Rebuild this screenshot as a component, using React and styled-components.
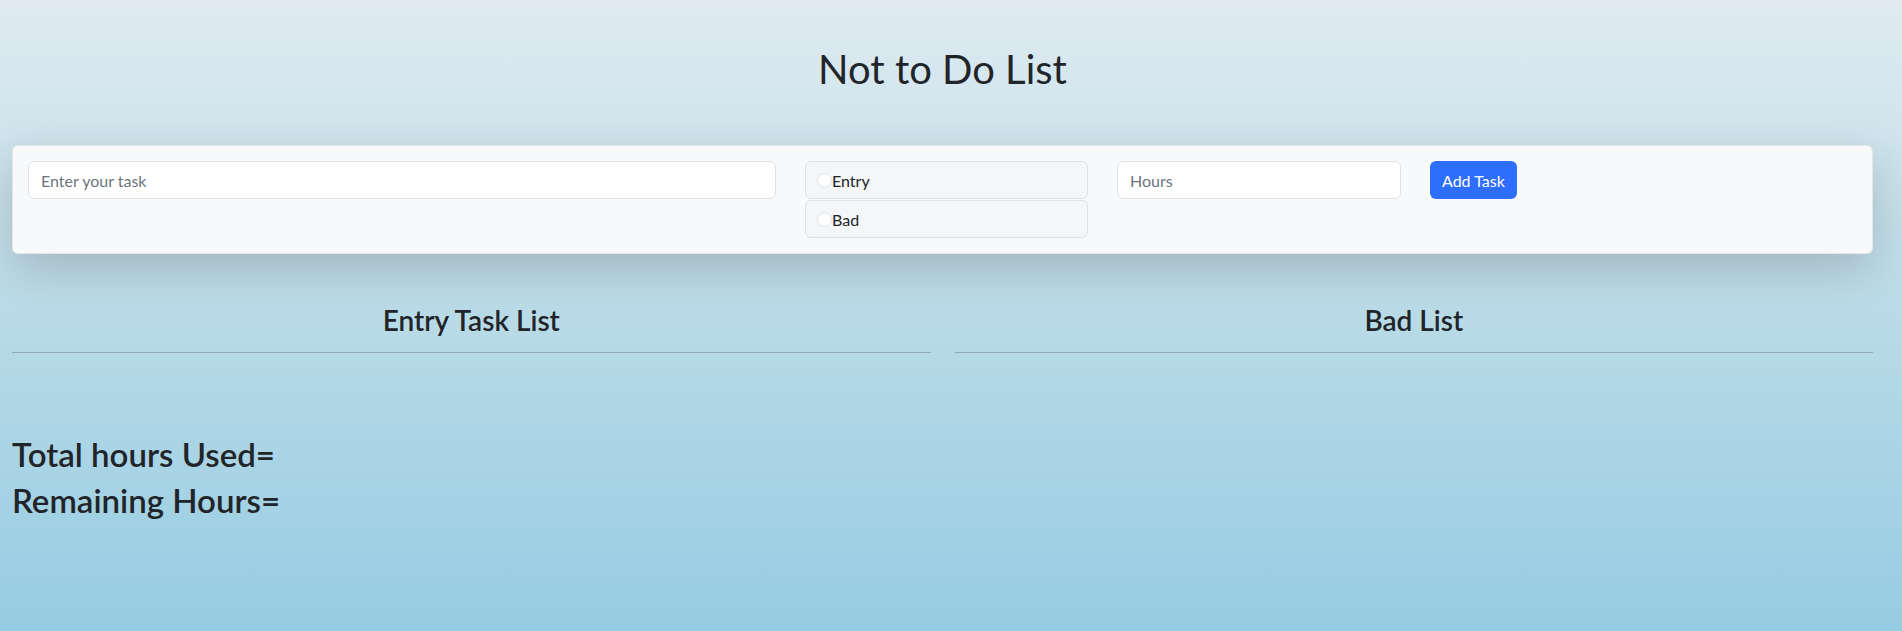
import React, { useState } from 'react';
import styled, { createGlobalStyle } from 'styled-components';

const GlobalStyle = createGlobalStyle`
  * {
    box-sizing: border-box;
  }

  body {
    margin: 0;
    font-family: Lato, "Open Sans", "Liberation Sans", sans-serif;
    color: #212529;
  }
`;

const Page = styled.div`
  min-height: 100vh;
  background: linear-gradient(to bottom, #e0ebf1 0%, #b9dbe7 50%, #96cce3 100%);
`;

const Container = styled.div`
  width: 1885px;
  padding: 45px 12px 40px;
`;

const Title = styled.h1`
  margin: 0;
  font-size: 40px;
  font-weight: 400;
  line-height: 48px;
  text-align: center;
`;

const Card = styled.form`
  margin-top: 52px;
  padding: 15px;
  background: #f8f9fa;
  border: 1px solid rgba(0, 0, 0, 0.08);
  border-radius: 6px;
  box-shadow: 0 1rem 3rem rgba(0, 0, 0, 0.175);
  display: grid;
  grid-template-columns: 748px 283px 284px auto;
  column-gap: 29px;
  align-items: start;
`;

const TextInput = styled.input`
  height: 38px;
  width: 100%;
  padding: 6px 12px;
  font-family: inherit;
  font-size: 16px;
  color: #212529;
  background: #fff;
  border: 1px solid #dee2e6;
  border-radius: 6px;
  outline: none;

  &::placeholder {
    color: #6c757d;
  }
`;

const RadioGroup = styled.div`
  display: flex;
  flex-direction: column;
  gap: 1px;
`;

const RadioOption = styled.label`
  height: 38px;
  display: flex;
  align-items: center;
  padding-left: 11px;
  background: #f5f6f8;
  border: 1px solid #dee2e6;
  border-radius: 6px;
  font-size: 16px;
  color: #212529;
  cursor: pointer;
`;

const RadioDot = styled.input`
  appearance: none;
  margin: 0;
  width: 15px;
  height: 15px;
  border: 1px solid #dee2e6;
  border-radius: 50%;
  background: #fff;

  &:checked {
    border: 4px solid #0d6efd;
  }
`;

const AddButton = styled.button`
  height: 38px;
  padding: 0 12px;
  justify-self: start;
  font-family: inherit;
  font-size: 16px;
  color: #fff;
  background: #2f6efc;
  border: none;
  border-radius: 6px;
  cursor: pointer;
`;

const ListRow = styled.div`
  margin-top: 49px;
  display: grid;
  grid-template-columns: 1fr 1fr;
  column-gap: 24px;
`;

const ListHeading = styled.h3`
  margin: 0;
  padding-bottom: 15px;
  font-size: 28px;
  font-weight: 600;
  line-height: 34px;
  text-align: center;
  border-bottom: 1px solid rgba(33, 37, 41, 0.25);
`;

const Summary = styled.div`
  margin-top: 82px;
`;

const SummaryLine = styled.h2`
  margin: 0 0 8px;
  font-size: 33px;
  font-weight: 600;
  line-height: 38px;
`;

const App = () => {
  const [type, setType] = useState('');

  return (
    <Page>
      <GlobalStyle />
      <Container>
        <Title>Not to Do List</Title>
        <Card onSubmit={(e) => e.preventDefault()}>
          <TextInput type='text' placeholder='Enter your task' />
          <RadioGroup>
            <RadioOption>
              <RadioDot
                type='radio'
                name='type'
                checked={type === 'entry'}
                onChange={() => setType('entry')}
              />
              Entry
            </RadioOption>
            <RadioOption>
              <RadioDot
                type='radio'
                name='type'
                checked={type === 'bad'}
                onChange={() => setType('bad')}
              />
              Bad
            </RadioOption>
          </RadioGroup>
          <TextInput type='number' placeholder='Hours' />
          <AddButton type='submit'>Add Task</AddButton>
        </Card>
        <ListRow>
          <ListHeading>Entry Task List</ListHeading>
          <ListHeading>Bad List</ListHeading>
        </ListRow>
        <Summary>
          <SummaryLine>Total hours Used=</SummaryLine>
          <SummaryLine>Remaining Hours=</SummaryLine>
        </Summary>
      </Container>
    </Page>
  );
};

export default App;
